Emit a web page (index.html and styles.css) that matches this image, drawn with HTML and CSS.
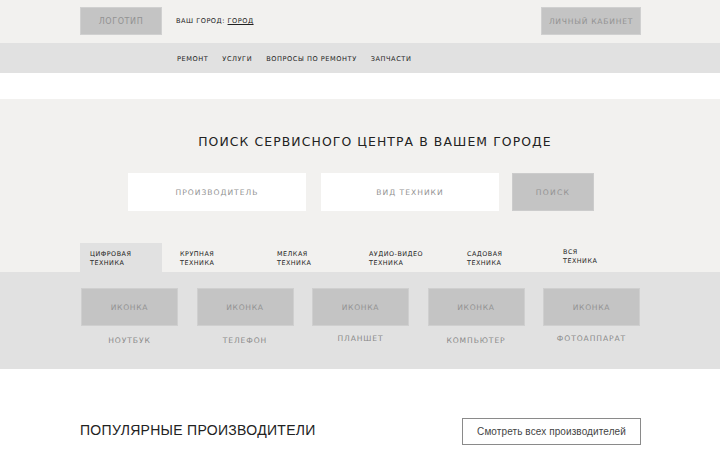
FILE: index.html
```html
<!DOCTYPE html>
<html lang="ru">
<head>
<meta charset="utf-8">
<title>Сервис</title>
<link rel="stylesheet" href="styles.css">
</head>
<body>
<header class="top">
  <div class="wrap top-row">
    <div class="logo">ЛОГОТИП</div>
    <div class="city">ВАШ ГОРОД: <a href="#" class="city-link">ГОРОД</a></div>
    <a href="#" class="cabinet">ЛИЧНЫЙ КАБИНЕТ</a>
  </div>
</header>
<nav class="menu">
  <div class="wrap menu-row">
    <a href="#">РЕМОНТ</a>
    <a href="#">УСЛУГИ</a>
    <a href="#">ВОПРОСЫ ПО РЕМОНТУ</a>
    <a href="#">ЗАПЧАСТИ</a>
  </div>
</nav>
<div class="spacer"></div>
<section class="hero">
  <h1 class="hero-title">ПОИСК СЕРВИСНОГО ЦЕНТРА В ВАШЕМ ГОРОДЕ</h1>
  <form class="search">
    <div class="field">ПРОИЗВОДИТЕЛЬ</div>
    <div class="field">ВИД ТЕХНИКИ</div>
    <button type="button" class="search-btn">ПОИСК</button>
  </form>
  <div class="wrap tabs">
    <div class="tab active">ЦИФРОВАЯ<br>ТЕХНИКА</div>
    <div class="tab">КРУПНАЯ<br>ТЕХНИКА</div>
    <div class="tab">МЕЛКАЯ<br>ТЕХНИКА</div>
    <div class="tab">АУДИО-ВИДЕО<br>ТЕХНИКА</div>
    <div class="tab">САДОВАЯ<br>ТЕХНИКА</div>
    <div class="tab tab-up">ВСЯ<br>ТЕХНИКА</div>
  </div>
</section>
<section class="panel">
  <div class="wrap cats">
    <div class="cat"><div class="icon">ИКОНКА</div><div class="cat-name">НОУТБУК</div></div>
    <div class="cat"><div class="icon">ИКОНКА</div><div class="cat-name">ТЕЛЕФОН</div></div>
    <div class="cat"><div class="icon">ИКОНКА</div><div class="cat-name up">ПЛАНШЕТ</div></div>
    <div class="cat"><div class="icon">ИКОНКА</div><div class="cat-name">КОМПЬЮТЕР</div></div>
    <div class="cat"><div class="icon">ИКОНКА</div><div class="cat-name up">ФОТОАППАРАТ</div></div>
  </div>
</section>
<section class="popular">
  <div class="wrap popular-row">
    <h2 class="popular-title">ПОПУЛЯРНЫЕ ПРОИЗВОДИТЕЛИ</h2>
    <a href="#" class="all-btn">Смотреть всех производителей</a>
  </div>
</section>
</body>
</html>
```
FILE: styles.css
```css
* { box-sizing: border-box; }
html, body { margin: 0; padding: 0; }
body {
  background: #ffffff;
  font-family: "DejaVu Sans", "Noto Sans", sans-serif;
  color: #222;
  width: 720px;
  overflow: hidden;
}
a { color: inherit; text-decoration: none; }
.wrap { width: 560px; margin: 0 auto; }

.top { background: #f2f1ef; height: 43px; }
.top-row { display: flex; align-items: center; height: 43px; padding-bottom: 1px; }
.logo {
  width: 82px; height: 28px;
  background: #c4c4c4; border: 1px solid #d0d0d0;
  color: #929292; font-size: 8px; letter-spacing: 0.6px;
  display: flex; align-items: center; justify-content: center;
}
.city { margin-left: 14px; font-size: 6.6px; letter-spacing: 0.5px; color: #222; }
.city-link { text-decoration: underline; }
.cabinet {
  margin-left: auto; margin-right: -1px;
  width: 100px; height: 28px;
  background: #c4c4c4; border: 1px solid #d0d0d0;
  color: #929292; font-size: 7.6px; letter-spacing: 0.75px;
  display: flex; align-items: center; justify-content: center;
}

.menu { background: #e1e1e1; height: 30px; }
.menu-row { display: flex; align-items: center; height: 30px; padding-left: 97px; gap: 14px; padding-top: 1px; }
.menu-row a { font-size: 6.6px; letter-spacing: 0.55px; color: #222; }

.spacer { height: 26px; }

.hero { background: #f2f1ef; padding-top: 35px; }
.hero-title {
  margin: 0; padding-left: 30px; text-align: center;
  font-size: 12.4px; font-weight: normal; letter-spacing: 1.1px;
  color: #222; line-height: 16px;
}
.search { display: flex; justify-content: center; gap: 15px; margin-top: 23px; padding-left: 2px; }
.field {
  width: 178px; height: 38px; background: #fff;
  display: flex; align-items: center; justify-content: center;
  font-size: 7.6px; letter-spacing: 1px; color: #929292;
}
.search-btn {
  width: 82px; height: 38px; margin-left: -2px;
  background: #c4c4c4; border: 1px solid #cccccc;
  font-family: inherit; font-size: 7.6px; letter-spacing: 1.3px; color: #929292;
  padding: 0;
}
.tabs {
  display: grid; grid-template-columns: 82px 89px 84px 90px 88px auto;
  column-gap: 8px; margin-top: 32px; height: 29px;
}
.tab {
  font-size: 6.4px; line-height: 9px; color: #222; letter-spacing: 0.5px;
  padding: 7px 0 0 10px;
}
.tab.active { background: #e1e1e1; padding-left: 10px; }
.tab.tab-up { padding-top: 5px; }

.panel { background: #e1e1e1; height: 97px; }
.cats { display: flex; justify-content: space-between; padding: 16px 0 0 1px; }
.cat { width: 97px; display: flex; flex-direction: column; align-items: center; }
.icon {
  width: 97px; height: 38px;
  background: #c4c4c4; border: 1px solid #cfcfcf;
  display: flex; align-items: center; justify-content: center;
  font-size: 7.6px; letter-spacing: 0.7px; color: #929292;
}
.cat-name { margin-top: 10px; font-size: 7.6px; letter-spacing: 0.9px; color: #8a8a8a; line-height: 10px; }
.cat-name.up { margin-top: 8px; }

.popular { padding-top: 49px; }
.popular-row { display: flex; align-items: center; justify-content: space-between; }
.popular-title {
  margin: 0 0 4px 0; font-family: "Liberation Sans", Arial, sans-serif;
  font-size: 14px; font-weight: normal; color: #222; letter-spacing: 0.3px;
}
.all-btn {
  width: 179px; height: 27px; margin-right: -1px; border: 1px solid #8a8a8a;
  display: flex; align-items: center; justify-content: center;
  font-family: "Liberation Sans", Arial, sans-serif; font-size: 10px; letter-spacing: 0.1px; color: #444;
}
```
